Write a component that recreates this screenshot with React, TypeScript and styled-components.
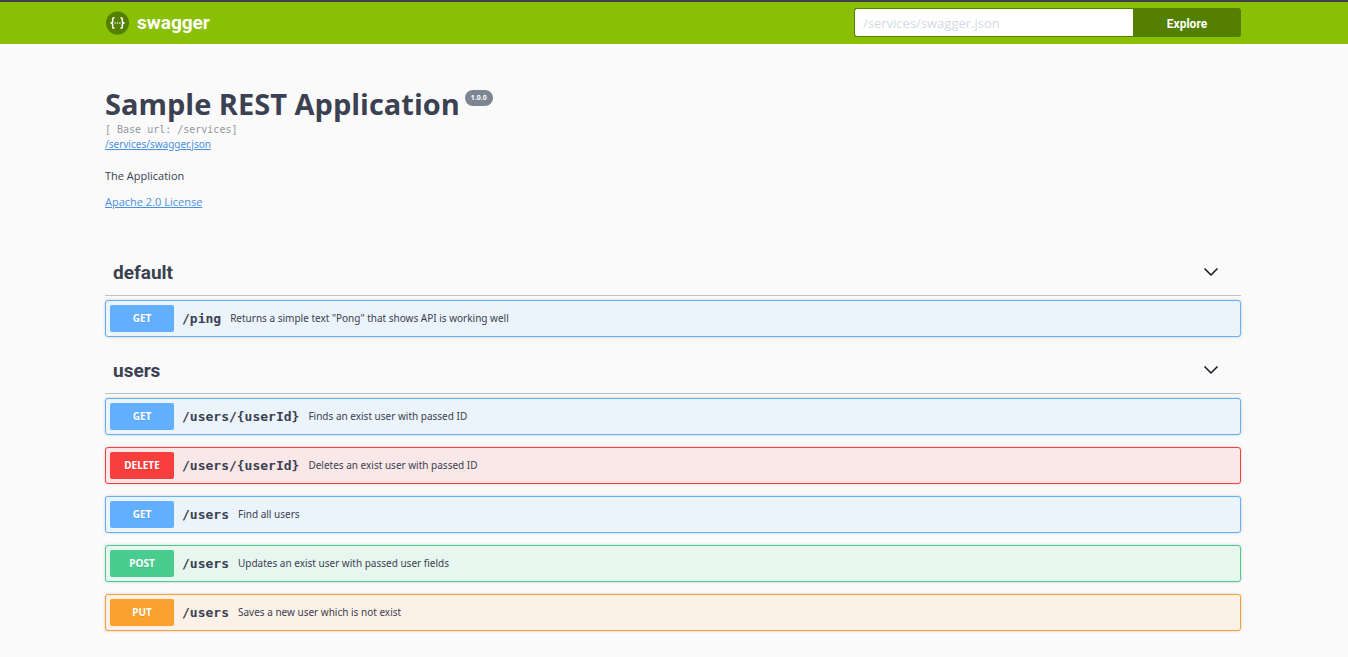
import React from "react";
import styled, { createGlobalStyle } from "styled-components";

const sans = `"Open Sans", "Noto Sans", sans-serif`;
const noto = `"Noto Sans", "Open Sans", sans-serif`;
const heading = `Roboto, "Noto Sans", sans-serif`;
const mono = `"DejaVu Sans Mono", "Liberation Mono", monospace`;

const GlobalStyle = createGlobalStyle`
  *, *::before, *::after { box-sizing: border-box; }
  body {
    margin: 0;
    background: #fafafa;
    color: #3b4151;
    font-family: ${sans};
  }
`;

const Wrapper = styled.div`
  max-width: 1168px;
  margin: 0 auto;
  padding: 0 17px 0 15px;
`;

const Topbar = styled.header`
  background: #89bf04;
  border-top: 2px solid #3e3d48;
  padding: 6px 0 7px;
`;

const TopbarRow = styled(Wrapper)`
  display: flex;
  align-items: center;
  justify-content: space-between;
  gap: 24px;
`;

const Brand = styled.a`
  display: flex;
  align-items: center;
  gap: 7px;
  color: #fff;
  font: 700 19px/26px ${heading};
  text-decoration: none;
`;

const SearchForm = styled.form`
  display: flex;
  flex: 0 1 387px;
  height: 29px;
`;

const SearchInput = styled.input`
  flex: 1;
  min-width: 0;
  margin: 0;
  padding: 0 8px;
  border: 1px solid #547f00;
  border-right: 0;
  border-radius: 3px 0 0 3px;
  background: #fff;
  color: #3b4151;
  font: 400 13px/16px ${sans};
  outline: none;
  &::placeholder { color: #d3dae3; opacity: 1; }
`;

const ExploreButton = styled.button`
  flex: 0 0 108px;
  padding: 2px 0 0;
  border: 0;
  border-radius: 0 3px 3px 0;
  background: #547f00;
  color: #fff;
  font: 700 12px/16px ${heading};
  cursor: pointer;
`;

const Info = styled.section`
  display: flex;
  flex-direction: column;
  align-items: flex-start;
  padding: 40px 0 41px;
`;

const TitleRow = styled.div`
  display: flex;
  align-items: flex-start;
  gap: 5px;
`;

const Title = styled.h1`
  margin: 0;
  font: 700 29px/40px ${sans};
`;

const Version = styled.span`
  margin-top: 6px;
  padding: 0 6px;
  border-radius: 8px;
  background: #7d8492;
  color: #fff;
  font: 700 7px/16px ${noto};
`;

const BaseUrl = styled.code`
  color: #9197a0;
  font: 400 10px/12px ${mono};
`;

const SpecLink = styled.a`
  color: #4990e2;
  font: 400 10px/16px ${noto};
`;

const LicenseLink = styled.a`
  color: #4990e2;
  font: 400 11px/16px ${sans};
`;

const Description = styled.p`
  margin: 16px 0 10px;
  font: 400 11px/16px ${sans};
`;

const Tag = styled.section`
  padding-bottom: 12px;
`;

const TagHeader = styled.h2`
  margin: 0 0 4px;
  border-bottom: 1px solid #bfc0c4;
`;

const TagToggle = styled.button`
  display: flex;
  align-items: center;
  justify-content: space-between;
  width: 100%;
  padding: 9px 22px 9px 8px;
  border: 0;
  background: none;
  color: #3b4151;
  font: 700 19px/26px ${heading};
  cursor: pointer;
`;

const OperationList = styled.div`
  display: flex;
  flex-direction: column;
  gap: 12px;
`;

const Operation = styled.button<{ $color: string; $tint: string }>`
  display: flex;
  align-items: center;
  width: 100%;
  padding: 4px;
  border: 1px solid ${(p) => p.$color};
  border-radius: 3px;
  background: ${(p) => p.$tint};
  box-shadow: 0 0 3px rgba(0, 0, 0, 0.19);
  color: #3b4151;
  text-align: left;
  cursor: pointer;
`;

const Method = styled.span<{ $color: string }>`
  flex: 0 0 64px;
  border-radius: 2px;
  background: ${(p) => p.$color};
  color: #fff;
  font: 700 10px/27px ${noto};
  text-align: center;
  text-shadow: 0 1px 0 rgba(0, 0, 0, 0.1);
`;

const Path = styled.span`
  padding: 0 9px 0 8px;
  font: 700 13px/16px ${mono};
`;

const Summary = styled.span`
  padding-bottom: 2px;
  font: 400 10px/16px ${noto};
`;

const methods = {
  GET: { color: "#61affe", tint: "#ebf3fb" },
  DELETE: { color: "#f93e3e", tint: "#fae7e7" },
  POST: { color: "#49cc90", tint: "#e8f6f0" },
  PUT: { color: "#fca130", tint: "#fbf1e6" },
};

type Op = { method: keyof typeof methods; path: string; summary: string };

const tags: { name: string; operations: Op[] }[] = [
  {
    name: "default",
    operations: [
      { method: "GET", path: "/ping", summary: 'Returns a simple text "Pong" that shows API is working well' },
    ],
  },
  {
    name: "users",
    operations: [
      { method: "GET", path: "/users/{userId}", summary: "Finds an exist user with passed ID" },
      { method: "DELETE", path: "/users/{userId}", summary: "Deletes an exist user with passed ID" },
      { method: "GET", path: "/users", summary: "Find all users" },
      { method: "POST", path: "/users", summary: "Updates an exist user with passed user fields" },
      { method: "PUT", path: "/users", summary: "Saves a new user which is not exist" },
    ],
  },
];

const Logo = () => (
  <svg width="25" height="24" viewBox="0 0 25 24" aria-hidden="true">
    <circle cx="12.5" cy="12" r="11.5" fill="#547f00" />
    <g fill="none" stroke="#fff" strokeWidth="1.5">
      <path d="M9.5 6.8H8.8Q7.7 6.8 7.7 8V10.2Q7.7 12 5.4 12Q7.7 12 7.7 13.8V16Q7.7 17.2 8.8 17.2H9.5" />
      <path d="M15.5 6.8H16.2Q17.3 6.8 17.3 8V10.2Q17.3 12 19.6 12Q17.3 12 17.3 13.8V16Q17.3 17.2 16.2 17.2H15.5" />
    </g>
    <g fill="#fff">
      <circle cx="10.1" cy="12" r="0.8" />
      <circle cx="12.5" cy="12" r="0.8" />
      <circle cx="14.9" cy="12" r="0.8" />
    </g>
  </svg>
);

const Chevron = () => (
  <svg width="16" height="10" viewBox="0 0 16 10" aria-hidden="true">
    <path d="M1.5 0.5L8 7L14.5 0.5" fill="none" stroke="#16181f" strokeWidth="1.5" />
  </svg>
);

export default function App() {
  return (
    <>
      <GlobalStyle />
      <Topbar>
        <TopbarRow>
          <Brand href="#">
            <Logo />
            swagger
          </Brand>
          <SearchForm onSubmit={(e) => e.preventDefault()}>
            <SearchInput type="text" aria-label="Specification URL" placeholder="/services/swagger.json" />
            <ExploreButton type="submit">Explore</ExploreButton>
          </SearchForm>
        </TopbarRow>
      </Topbar>
      <Wrapper as="main">
        <Info>
          <TitleRow>
            <Title>Sample REST Application</Title>
            <Version>1.0.0</Version>
          </TitleRow>
          <BaseUrl>[ Base url: /services]</BaseUrl>
          <SpecLink href="#">/services/swagger.json</SpecLink>
          <Description>The Application</Description>
          <LicenseLink href="#">Apache 2.0 License</LicenseLink>
        </Info>
        {tags.map((tag) => (
          <Tag key={tag.name}>
            <TagHeader>
              <TagToggle type="button" aria-expanded="true">
                {tag.name}
                <Chevron />
              </TagToggle>
            </TagHeader>
            <OperationList>
              {tag.operations.map((op) => (
                <Operation
                  key={op.method + op.path}
                  type="button"
                  $color={methods[op.method].color}
                  $tint={methods[op.method].tint}
                >
                  <Method $color={methods[op.method].color}>{op.method}</Method>
                  <Path>{op.path}</Path>
                  <Summary>{op.summary}</Summary>
                </Operation>
              ))}
            </OperationList>
          </Tag>
        ))}
      </Wrapper>
    </>
  );
}
